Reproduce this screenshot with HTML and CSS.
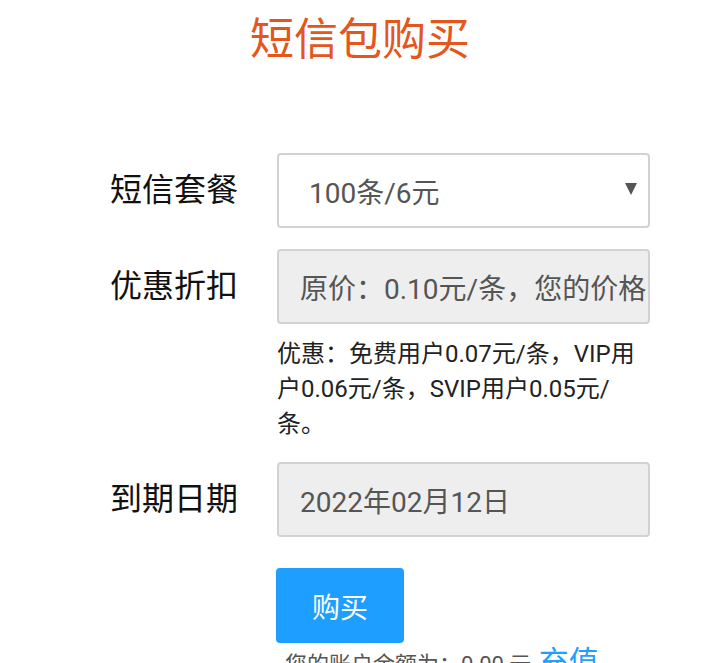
FILE: index.html
```html
<!DOCTYPE html>
<html lang="zh-CN">
<head>
    <meta charset="UTF-8">
    <meta name="viewport" content="width=device-width, initial-scale=1.0">
    <title>短信包购买</title>
    <link rel="stylesheet" href="styles.css">
</head>
<body>
    <div class="container">
        <h1 class="title">短信包购买</h1>

        <form class="buy-form">
            <div class="form-item">
                <label class="form-label">短信套餐</label>
                <div class="form-block">
                    <div class="select">
                        <span>100条/6元</span>
                        <span class="arrow"></span>
                    </div>
                </div>
            </div>

            <div class="form-item">
                <label class="form-label">优惠折扣</label>
                <div class="form-block">
                    <div class="input disabled">原价：0.10元/条，您的价格：0.07元/条</div>
                </div>
            </div>
            <div class="form-tip">优惠：免费用户0.07元/条，VIP用户0.06元/条，SVIP用户0.05元/条。</div>

            <div class="form-item">
                <label class="form-label">到期日期</label>
                <div class="form-block">
                    <div class="input disabled">2022年02月12日</div>
                </div>
            </div>

            <div class="form-actions">
                <button type="button" class="btn">购买</button>
            </div>
            <div class="balance">您的账户余额为：0.00 元 <a href="#" class="recharge">充值</a></div>
        </form>
    </div>
</body>
</html>
```

FILE: styles.css
```css
body {
    margin: 0;
    background-color: #fff;
    font-family: Roboto, "Noto Sans CJK SC", sans-serif;
    color: #222;
}
.container {
    width: 720px;
    height: 663px;
    overflow: hidden;
}
.title {
    margin: 0;
    height: 80px;
    line-height: 80px;
    text-align: center;
    font-size: 44px;
    font-weight: normal;
    color: #e4561c;
}
.buy-form {
    padding-top: 73px;
}
.form-item {
    display: flex;
    align-items: center;
    margin-bottom: 21px;
}
.form-label {
    flex: none;
    width: 277px;
    padding-left: 110px;
    padding-bottom: 8px;
    box-sizing: border-box;
    font-size: 32px;
    color: #111;
    white-space: nowrap;
}
.form-block {
    flex: none;
    width: 373px;
}
.select, .input {
    height: 75px;
    border: 2px solid #d2d2d2;
    border-radius: 4px;
    box-sizing: border-box;
    font-size: 28px;
    color: #555;
    display: flex;
    align-items: center;
    white-space: nowrap;
    overflow: hidden;
}
.select {
    justify-content: space-between;
    padding: 0 11px 0 30px;
}
.arrow {
    width: 0;
    height: 0;
    border-left: 6px solid transparent;
    border-right: 6px solid transparent;
    border-top: 12px solid #555;
    margin-bottom: 4px;
}
.input {
    padding-left: 21px;
}
.disabled {
    background-color: #eee;
}
.form-tip {
    margin: -8px 0 20px 277px;
    width: 372px;
    font-size: 24px;
    line-height: 35px;
    color: #222;
}
.form-actions {
    padding-left: 276px;
    margin-top: 31px;
}
.btn {
    width: 128px;
    height: 75px;
    border: none;
    border-radius: 4px;
    background-color: #1e9fff;
    color: #fff;
    font-family: Roboto, "Noto Sans CJK SC", sans-serif;
    font-size: 28px;
    cursor: pointer;
}
.balance {
    padding-left: 285px;
    margin-top: 4px;
    font-size: 22px;
    color: #555;
    line-height: 30px;
}
.recharge {
    font-size: 30px;
    color: #1e9fff;
    text-decoration: none;
    margin-left: 2px;
}
```
